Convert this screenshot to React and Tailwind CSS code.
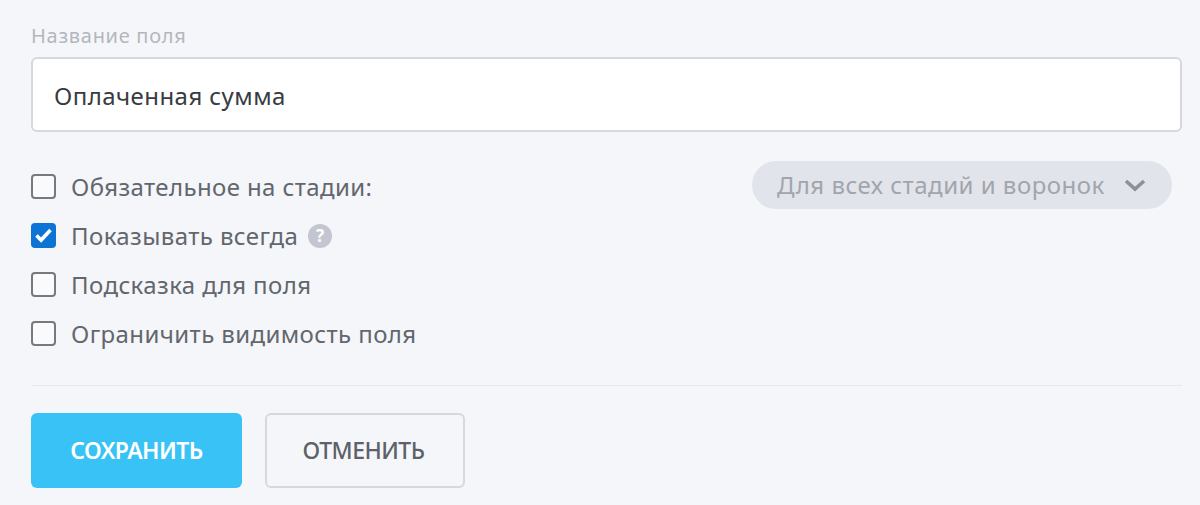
import React from "react";

const Check = ({ checked, label, children }) => (
  <div className="flex items-center h-[49px]">
    {checked ? (
      <div className="w-[25px] h-[25px] rounded-[4px] bg-[#0b74d5] flex items-center justify-center">
        <svg width="21" height="21" viewBox="0 0 21 21" fill="none">
          <path d="M3.5 10.5l4.6 4.6L17.5 5" stroke="#fff" strokeWidth="3.6" />
        </svg>
      </div>
    ) : (
      <div className="w-[25px] h-[25px] rounded-[4px] border-2 border-[#77797e] bg-[#fafafc]" />
    )}
    <span className="ml-[15px] text-[24px] tracking-[0.4px] text-[#62666d] leading-none">{label}</span>
    {children}
  </div>
);

export default function App() {
  return (
    <div className="w-[1200px] h-[505px] overflow-hidden bg-[#f5f6fa] pl-[31px] pr-[18px] font-['Noto_Sans',sans-serif]">
      <div className="h-[57px] pt-[22px] text-[20px] tracking-[0.7px] leading-[28px] text-[#b3b6bd]">Название поля</div>
      <div className="h-[75px] bg-white border-2 border-[#d6d8dd] rounded-[6px] flex items-center pl-[21px] pt-[2px] text-[24px] tracking-[0.44px] text-[#383b41]">
        Оплаченная сумма
      </div>
      <div className="relative mt-[30px]">
        <Check label="Обязательное на стадии:" />
        <Check checked label="Показывать всегда">
          <div className="ml-[10px] w-[24px] h-[24px] rounded-full bg-[#c3c6d0] flex items-center justify-center text-white text-[17px] font-bold leading-none">
            ?
          </div>
        </Check>
        <Check label="Подсказка для поля" />
        <Check label="Ограничить видимость поля" />
        <div className="absolute right-[10px] top-[-1px] w-[420px] h-[48px] rounded-full bg-[#e1e4ea] flex items-center pl-[25px] text-[24px] tracking-[0.5px] text-[#a2a5ad]">
          <span className="leading-none">Для всех стадий и воронок</span>
          <svg className="ml-[19px]" width="22" height="14" viewBox="0 0 22 14" fill="none">
            <path d="M2 3l9 8 9-8" stroke="#8d9098" strokeWidth="3.6" />
          </svg>
        </div>
      </div>
      <div className="mt-[27px] border-t border-[#e8e9ee]" />
      <div className="mt-[27px] flex gap-[23px]">
        <button className="w-[211px] h-[75px] rounded-[6px] bg-[#39c2f5] text-white text-[23px] font-semibold tracking-[-0.6px]">
          СОХРАНИТЬ
        </button>
        <button className="w-[200px] h-[75px] pr-[3px] rounded-[6px] border-2 border-[#d6d8dd] text-[#5d6169] text-[23px] font-medium tracking-[-0.5px]">
          ОТМЕНИТЬ
        </button>
      </div>
    </div>
  );
}
